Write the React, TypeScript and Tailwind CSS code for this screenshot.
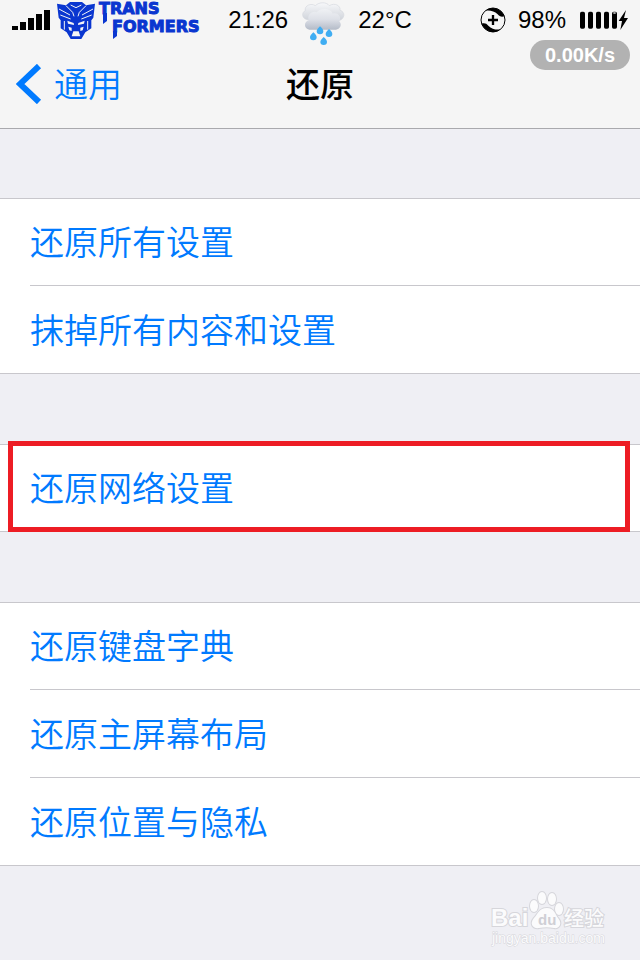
import React from "react";

const latin = "font-['Liberation_Sans','Noto_Sans_CJK_SC',sans-serif]";
const cjk = "font-['Noto_Sans_CJK_SC',sans-serif]";

function Signal() {
  return (
    <svg className="h-5 w-[38px]" viewBox="0 0 38 20" aria-hidden="true">
      <rect x="0" y="16" width="6" height="4" />
      <rect x="8" y="12" width="6" height="8" />
      <rect x="16" y="8" width="6" height="12" />
      <rect x="24" y="4" width="6" height="16" />
      <rect x="32" y="0" width="6" height="20" />
    </svg>
  );
}

function Emblem() {
  return (
    <svg className="h-[39px] w-10" viewBox="0 0 120 117" aria-hidden="true">
      <path
        fill="#0a36d0"
        d="M3 8 L30 13 L42 3 H78 L90 13 L117 8 L112 50 L106 58 V82 L88 94 L76 114 H44 L32 94 L14 82 V58 L8 50 Z"
      />
      <g stroke="#f5f5f5" strokeWidth="3" fill="none">
        <path d="M30 14 L50 34 L54 46 M90 14 L70 34 L66 46" />
        <path d="M44 12 L60 20 L76 12" />
        <path d="M9 24 L42 42 M111 24 L78 42" />
        <path d="M13 42 L44 54 M107 42 L76 54" />
        <path d="M25 60 V86 M95 60 V86" />
      </g>
      <g fill="#f5f5f5">
        <path d="M34 59 L53 66 L54 72 L36 68 Z M86 59 L67 66 L66 72 L84 68 Z" />
        <path d="M37 77 L47 80 V90 L40 88 Z M83 77 L73 80 V90 L80 88 Z" />
        <path d="M52 91 H68 L73 106 H47 Z" />
      </g>
    </svg>
  );
}

function Wordmark() {
  return (
    <svg className="h-[39px] w-[106px]" viewBox="0 0 106 39" role="img" aria-label="TRANSFORMERS">
      <g
        fill="#0a36d0"
        stroke="#0a36d0"
        strokeWidth="1"
        fontFamily="'DejaVu Sans', sans-serif"
        fontWeight="700"
        fontSize="16"
      >
        <text x="3" y="13">TRANS</text>
        <text x="16" y="31">FORMERS</text>
      </g>
      <path fill="#0a36d0" d="M7 12 H11 V20 L7 23 Z M17 30 H21 V35 L17 38 Z" />
    </svg>
  );
}

function RainCloud() {
  return (
    <svg className="h-[46px] w-[46px]" viewBox="0 0 138 138" aria-hidden="true">
      <defs>
        <linearGradient id="cloud-back" x1="0" y1="0" x2="0" y2="1">
          <stop offset="0" stopColor="#f7f8fa" />
          <stop offset="1" stopColor="#cfd3da" />
        </linearGradient>
        <linearGradient id="cloud-front" x1="0" y1="0" x2="0" y2="1">
          <stop offset="0" stopColor="#eff1f4" />
          <stop offset="0.5" stopColor="#dde0e7" />
          <stop offset="1" stopColor="#b4bbc8" />
        </linearGradient>
      </defs>
      <path
        fill="url(#cloud-back)"
        stroke="#d5d8de"
        strokeWidth="2"
        d="M22 62 C4 58 5 39 16 35 C12 20 34 11 46 20 C58 8 80 9 88 20 C104 10 123 20 120 34 C137 38 134 60 119 64 Z"
      />
      <path
        fill="url(#cloud-front)"
        d="M28 92 C11 90 11 68 26 64 C20 46 38 34 50 40 C60 26 92 26 98 44 C114 38 126 55 118 67 C128 78 119 91 108 92 Z"
      />
      <g fill="#3fadf2">
        <path d="M60 82 C66 88 70 91 70 97 A10 9 0 0 1 50 97 C50 91 55 88 60 82 Z" />
        <path d="M87 90 C93 96 97 99 97 105 A10 9 0 0 1 77 105 C77 99 82 96 87 90 Z" />
        <path d="M40 100 C46 106 50 109 50 115 A10 9 0 0 1 30 115 C30 109 35 106 40 100 Z" />
        <path d="M71 114 C77 120 81 123 81 129 A10 9 0 0 1 61 129 C61 123 66 120 71 114 Z" />
      </g>
    </svg>
  );
}

function RotationIcon() {
  return (
    <svg className="h-[26px] w-[26px]" viewBox="0 0 78 78" aria-hidden="true">
      <circle cx="39" cy="39" r="36" fill="none" stroke="#000" strokeWidth="3" />
      <path d="M16 11 A36 36 0 0 1 73 28 C66 31 58 29 53 22 C43 12 30 9 16 11 Z" />
      <path d="M62 67 A36 36 0 0 1 5 50 C12 47 20 49 25 56 C35 66 48 69 62 67 Z" />
      <path d="M39 24 V54 M24 39 H54" stroke="#000" strokeWidth="7" />
    </svg>
  );
}

function Battery() {
  return (
    <svg className="h-5 w-12" viewBox="0 0 144 60" aria-hidden="true">
      {[0, 24, 48, 72, 96].map((x) => (
        <rect key={x} x={x} y="5" width="15" height="51" rx="5" />
      ))}
      <path d="M100 9 H107" stroke="#f5f5f5" strokeWidth="4" />
      <path d="M138 0 L116 33 H126 L121 60 L144 24 H132 Z" />
    </svg>
  );
}

function StatusBar() {
  return (
    <div className={`flex h-10 items-center text-2xl text-black ${latin}`}>
      <div className="flex flex-1 items-center pl-3">
        <Signal />
        <div className="ml-[6px] flex">
          <Emblem />
          <Wordmark />
        </div>
      </div>
      <div className="flex items-center">
        <span>21:26</span>
        <span className="mr-3 ml-3 pt-1">
          <RainCloud />
        </span>
        <span>22°C</span>
      </div>
      <div className="flex flex-1 items-center justify-end pr-3">
        <RotationIcon />
        <span className="mr-[14px] ml-3">98%</span>
        <Battery />
      </div>
    </div>
  );
}

function Header() {
  return (
    <header className="relative h-32 bg-[#f5f5f5] shadow-[0_1px_0_#a9a9ad]">
      <StatusBar />
      <div className={`grid h-[88px] grid-cols-3 items-center text-[34px] ${cjk}`}>
        <button type="button" className="flex items-center gap-3 pl-4 font-[350] text-[#007aff]">
          <svg className="h-10 w-[26px]" viewBox="0 0 26 40" aria-hidden="true">
            <path d="M23 2 L4 20 L23 38" fill="none" stroke="#007aff" strokeWidth="6" />
          </svg>
          <span className="pb-1">通用</span>
        </button>
        <h1 className="pb-1 text-center font-medium text-black">还原</h1>
      </div>
      <div
        className={`absolute top-10 right-[10px] flex h-[30px] w-[100px] items-center justify-center rounded-full bg-[#b2b2b2] text-xl font-bold text-white ${latin}`}
      >
        0.00K/s
      </div>
    </header>
  );
}

function Group({ items, highlighted = false }: { items: string[]; highlighted?: boolean }) {
  return (
    <section className="relative bg-white shadow-[inset_0_1px_0_#c8c7cc,inset_0_-1px_0_#c8c7cc]">
      <ul>
        {items.map((item) => (
          <li key={item} className="group pl-[30px]">
            <button
              type="button"
              className={`flex h-[88px] w-full items-center border-b border-[#c8c7cc] pb-[2px] text-left text-[34px] font-[350] text-[#007aff] group-last:border-transparent ${cjk}`}
            >
              {item}
            </button>
          </li>
        ))}
      </ul>
      {highlighted && (
        <div className="pointer-events-none absolute -top-[3px] right-[10px] bottom-0 left-2 border-5 border-[#ed1c24]" />
      )}
    </section>
  );
}

function Watermark() {
  return (
    <svg
      className="h-[60px] w-[120px] overflow-visible"
      viewBox="0 0 120 60"
      role="img"
      aria-label="Baidu 经验"
    >
      <g
        fill="#fbfbfc"
        stroke="#d6d6db"
        strokeWidth="2"
        paintOrder="stroke"
        fontFamily="'Liberation Sans', 'Noto Sans CJK SC', sans-serif"
      >
        <text x="3" y="34" fontSize="24" fontWeight="700">Bai</text>
        <ellipse cx="46" cy="14" rx="4" ry="6" />
        <ellipse cx="54" cy="6" rx="4" ry="6" />
        <ellipse cx="64" cy="7" rx="4" ry="6" />
        <ellipse cx="71" cy="17" rx="4" ry="6" />
        <path d="M59 16 C66 16 67 22 70 26 C75 32 71 37 66 36 C61 35 56 35 51 36 C45 37 41 32 46 26 C50 22 51 16 59 16 Z" />
        <text x="76" y="34" fontSize="20" fontWeight="500">经验</text>
        <text x="4" y="51" fontSize="14" strokeWidth="1">jingyan.baidu.com</text>
      </g>
      <text
        x="50"
        y="33"
        fontSize="15"
        fontWeight="700"
        fill="#cfcfd5"
        fontFamily="'Liberation Sans', sans-serif"
      >
        du
      </text>
    </svg>
  );
}

export default function App() {
  return (
    <div className="flex min-h-screen flex-col bg-[#efeff4]">
      <Header />
      <main className="flex flex-col gap-[70px] pt-[70px]">
        <Group items={["还原所有设置", "抹掉所有内容和设置"]} />
        <Group items={["还原网络设置"]} highlighted />
        <Group items={["还原键盘字典", "还原主屏幕布局", "还原位置与隐私"]} />
      </main>
      <footer className="mt-auto flex justify-end pr-8 pb-2">
        <Watermark />
      </footer>
    </div>
  );
}
